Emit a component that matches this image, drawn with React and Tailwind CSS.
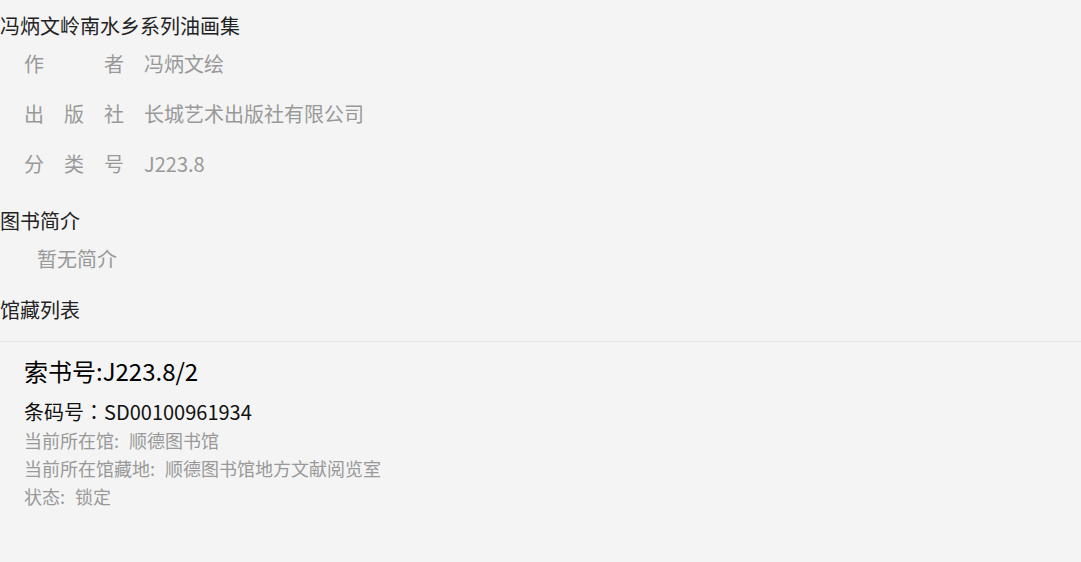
const INFO = [
  { label: ['作', '者'], value: '冯炳文绘' },
  { label: ['出', '版', '社'], value: '长城艺术出版社有限公司' },
  { label: ['分', '类', '号'], value: 'J223.8' },
];

const HOLDING = {
  callNo: 'J223.8/2',
  barcode: 'SD00100961934',
  library: '顺德图书馆',
  location: '顺德图书馆地方文献阅览室',
  status: '锁定',
};

function InfoRow({ label, value }) {
  return (
    <div className="flex items-center h-[50px] pl-6">
      <div className="w-[100px] flex justify-between">
        {label.map((c, i) => (
          <span key={i}>{c}</span>
        ))}
      </div>
      <div className="ml-5">{value}</div>
    </div>
  );
}

function Field({ label, value }) {
  return (
    <div>
      {label}:<span className="ml-[10px]">{value}</span>
    </div>
  );
}

export default function App() {
  return (
    <div className="min-h-screen w-full bg-[#f4f4f4] font-['Noto_Sans_CJK_SC',sans-serif] text-[20px]">
      <h1 className="pt-[13px] leading-[26px] text-[20px] font-normal text-[#222]">冯炳文岭南水乡系列油画集</h1>
      <div className="text-[#999] leading-[30px]">
        {INFO.map((r, i) => (
          <InfoRow key={i} label={r.label} value={r.value} />
        ))}
      </div>

      <h2 className="mt-[17px] leading-[30px] text-[20px] font-normal text-[#222]">图书简介</h2>
      <p className="mt-[8px] pl-[37px] leading-[30px] text-[#999]">暂无简介</p>

      <h2 className="mt-[21px] leading-[30px] text-[20px] font-normal text-[#222]">馆藏列表</h2>
      <div className="mt-[16px] border-t border-[#e5e5e5]">
        <div className="pl-6 pt-[14px]">
          <div className="text-[24px] leading-[30px] text-black">索书号:{HOLDING.callNo}</div>
          <div className="mt-[12px] text-[20px] leading-[28px] text-[#111]">
            条码号<span className="font-['Noto_Sans_CJK_JP',sans-serif]">：</span>{HOLDING.barcode}
          </div>
          <div className="text-[18px] leading-[28px] text-[#999]">
            <Field label="当前所在馆" value={HOLDING.library} />
            <Field label="当前所在馆藏地" value={HOLDING.location} />
            <Field label="状态" value={HOLDING.status} />
          </div>
        </div>
      </div>
    </div>
  );
}
